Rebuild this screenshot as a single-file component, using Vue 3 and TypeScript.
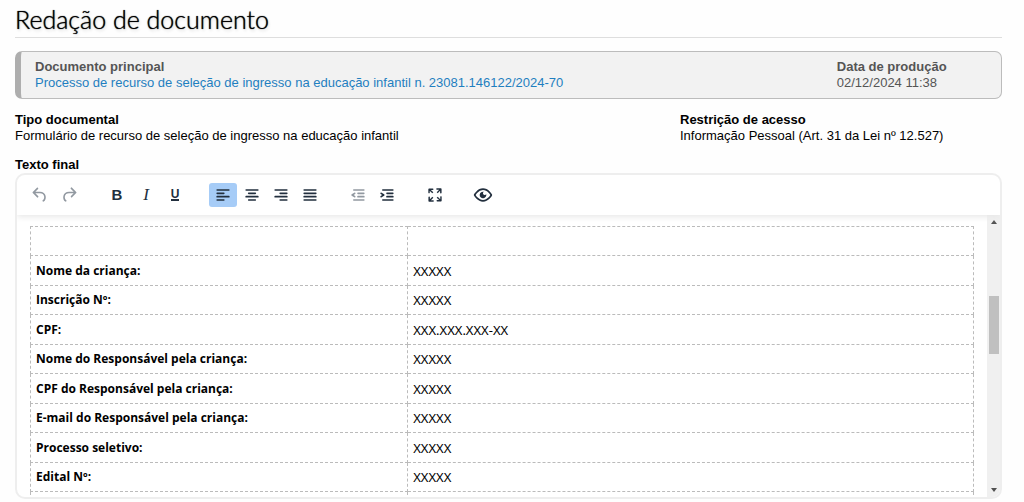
<script setup lang="ts">
import { ref } from 'vue'

interface Tool {
  id: string
  label: string
  path?: string
  glyph?: string
  disabled?: boolean
}

interface Field {
  label: string
  value: string
}

const line = (x: number, y: number, w: number): string =>
  `M${x} ${y}h${w}a1 1 0 0 1 0 2h${-w}a1 1 0 0 1 0-2Z`

const groups: Tool[][] = [
  [
    {
      id: 'undo',
      label: 'Desfazer',
      disabled: true,
      path: 'M6.4 8H12c3.7 0 6.2 2 6.8 5.1.6 2.7-.4 5.6-2.3 6.8a1 1 0 0 1-1-1.8c1.1-.6 1.8-2.7 1.4-4.6-.5-2.1-2.1-3.5-4.9-3.5H6.4l3.3 3.3a1 1 0 1 1-1.4 1.4l-5-5a1 1 0 0 1 0-1.4l5-5a1 1 0 0 1 1.4 1.4L6.4 8Z',
    },
    {
      id: 'redo',
      label: 'Refazer',
      disabled: true,
      path: 'M17.6 10H12c-2.8 0-4.4 1.4-4.9 3.5-.4 2 .3 4 1.4 4.6a1 1 0 1 1-1 1.8c-2-1.2-2.9-4.1-2.3-6.8.6-3 3-5.1 6.8-5.1h5.6l-3.3-3.3a1 1 0 1 1 1.4-1.4l5 5a1 1 0 0 1 0 1.4l-5 5a1 1 0 0 1-1.4-1.4l3.3-3.3Z',
    },
  ],
  [
    { id: 'bold', label: 'Negrito', glyph: 'B' },
    { id: 'italic', label: 'Itálico', glyph: 'I' },
    { id: 'underline', label: 'Sublinhado', glyph: 'U' },
  ],
  [
    { id: 'left', label: 'Alinhar à esquerda', path: line(5, 5, 14) + line(5, 9, 8) + line(5, 13, 14) + line(5, 17, 8) },
    { id: 'center', label: 'Centralizar', path: line(5, 5, 14) + line(8, 9, 8) + line(5, 13, 14) + line(8, 17, 8) },
    { id: 'right', label: 'Alinhar à direita', path: line(5, 5, 14) + line(11, 9, 8) + line(5, 13, 14) + line(11, 17, 8) },
    { id: 'justify', label: 'Justificar', path: line(5, 5, 14) + line(5, 9, 14) + line(5, 13, 14) + line(5, 17, 14) },
  ],
  [
    {
      id: 'outdent',
      label: 'Diminuir recuo',
      disabled: true,
      path: line(7, 5, 12) + line(12, 9, 7) + line(12, 13, 7) + line(7, 17, 12) +
        'M8.6 13.2a1 1 0 0 1-1.2 1.6l-3-2a1 1 0 0 1 0-1.6l3-2a1 1 0 0 1 1.2 1.6L6.8 12l1.8 1.2Z',
    },
    {
      id: 'indent',
      label: 'Aumentar recuo',
      path: line(7, 5, 12) + line(12, 9, 7) + line(12, 13, 7) + line(7, 17, 12) +
        'M4.4 13.2 6.2 12l-1.8-1.2a1 1 0 0 1 1.2-1.6l3 2a1 1 0 0 1 0 1.6l-3 2a1 1 0 1 1-1.2-1.6Z',
    },
  ],
  [
    {
      id: 'fullscreen',
      label: 'Tela cheia',
      path: 'm15.3 10-1.2-1.3 2.9-3h-2.3a.9.9 0 1 1 0-1.7H19c.5 0 .9.4.9.9v4.4a.9.9 0 1 1-1.8 0V7l-2.9 3Zm0 4 3 3v-2.3a.9.9 0 1 1 1.7 0V19c0 .5-.4.9-.9.9h-4.4a.9.9 0 1 1 0-1.8H17l-3-2.9 1.3-1.2ZM10 15.4l-2.9 3h2.3a.9.9 0 1 1 0 1.7H5a.9.9 0 0 1-.9-.9v-4.4a.9.9 0 1 1 1.8 0V17l2.9-3 1.2 1.3ZM8.7 10 5.7 7v2.3a.9.9 0 0 1-1.7 0V5c0-.5.4-.9.9-.9h4.4a.9.9 0 0 1 0 1.8H7l3 2.9-1.3 1.2Z',
    },
  ],
  [
    {
      id: 'preview',
      label: 'Visualizar',
      path: 'M3.5 12.5c.5.8 1.1 1.6 1.8 2.3 2 2 4.2 3.2 6.7 3.2s4.7-1.2 6.7-3.2a16.2 16.2 0 0 0 2.1-2.8 15.7 15.7 0 0 0-2.1-2.8c-2-2-4.2-3.2-6.7-3.2a9.3 9.3 0 0 0-6.7 3.2A16.2 16.2 0 0 0 3.2 12c0 .2.2.3.3.5Zm-2.4-1 .7-1.2L4 7.8C6.2 5.4 8.9 4 12 4c3 0 5.8 1.4 8.1 3.8a18.2 18.2 0 0 1 2.8 3.7v1l-.7 1.2a18.1 18.1 0 0 1-2.1 2.5c-2.3 2.4-5 3.8-8.1 3.8-3 0-5.8-1.4-8.1-3.8a18.2 18.2 0 0 1-2.8-3.7 1 1 0 0 1 0-1Zm12-3.3a2 2 0 1 0 2.7 2.6 4 4 0 1 1-2.6-2.6Z',
    },
  ],
]

const active = ref('left')

function choose(tool: Tool): void {
  if (['left', 'center', 'right', 'justify'].includes(tool.id)) active.value = tool.id
}

const fields: Field[] = [
  { label: '', value: '' },
  { label: 'Nome da criança:', value: 'XXXXX' },
  { label: 'Inscrição Nº:', value: 'XXXXX' },
  { label: 'CPF:', value: 'XXX.XXX.XXX-XX' },
  { label: 'Nome do Responsável pela criança:', value: 'XXXXX' },
  { label: 'CPF do Responsável pela criança:', value: 'XXXXX' },
  { label: 'E-mail do Responsável pela criança:', value: 'XXXXX' },
  { label: 'Processo seletivo:', value: 'XXXXX' },
  { label: 'Edital Nº:', value: 'XXXXX' },
  { label: '', value: '' },
]
</script>

<template>
  <main class="page">
    <h1 class="title">Redação de documento</h1>

    <section class="card">
      <dl class="item">
        <dt>Documento principal</dt>
        <dd><a href="#">Processo de recurso de seleção de ingresso na educação infantil n. 23081.146122/2024-70</a></dd>
      </dl>
      <dl class="item date">
        <dt>Data de produção</dt>
        <dd>02/12/2024 11:38</dd>
      </dl>
    </section>

    <section class="details">
      <dl class="item">
        <dt>Tipo documental</dt>
        <dd>Formulário de recurso de seleção de ingresso na educação infantil</dd>
      </dl>
      <dl class="item access">
        <dt>Restrição de acesso</dt>
        <dd>Informação Pessoal (Art. 31 da Lei nº 12.527)</dd>
      </dl>
    </section>

    <h2 id="final-text" class="label">Texto final</h2>
    <section class="editor" aria-labelledby="final-text">
      <div class="toolbar" role="toolbar">
        <div v-for="(group, i) in groups" :key="i" class="group">
          <button
            v-for="tool in group"
            :key="tool.id"
            type="button"
            class="tool"
            :class="{ active: active === tool.id }"
            :aria-label="tool.label"
            :disabled="tool.disabled"
            @click="choose(tool)"
          >
            <span v-if="tool.glyph" :class="tool.id">{{ tool.glyph }}</span>
            <svg v-else width="20" height="20" viewBox="0 0 24 24" aria-hidden="true">
              <path :d="tool.path" fill="currentColor" fill-rule="evenodd" />
            </svg>
          </button>
        </div>
      </div>

      <div class="viewport">
        <div class="content">
          <table class="form">
            <colgroup>
              <col class="names">
              <col>
            </colgroup>
            <tbody>
              <tr v-for="(field, i) in fields" :key="i">
                <th scope="row">{{ field.label }}</th>
                <td>{{ field.value }}</td>
              </tr>
            </tbody>
          </table>
        </div>
        <div class="scrollbar" aria-hidden="true">
          <svg width="14" height="14" viewBox="0 0 14 14"><path d="M4 9 7 5l3 4Z" fill="#505050" /></svg>
          <div class="track">
            <div class="thumb"></div>
          </div>
          <svg width="14" height="14" viewBox="0 0 14 14"><path d="M4 5 7 9l3-4Z" fill="#505050" /></svg>
        </div>
      </div>
    </section>
  </main>
</template>

<style>
body {
  margin: 0;
  background: #fefefe;
}
</style>

<style scoped>
.page {
  box-sizing: border-box;
  display: flex;
  flex-direction: column;
  height: 100vh;
  padding: 2px 22px 3px 15px;
  color: #000;
  font: 13px/16px "Liberation Sans", Arial, sans-serif;
}

.title {
  flex: none;
  margin: 0 0 13px;
  border-bottom: 1px solid #dedede;
  font: 300 25px/35px Lato, Optima, sans-serif;
  text-shadow: 0 0 1px #000, 1px 2px 3px #ddd;
}

.card,
.details {
  display: flex;
  flex: none;
}

.card {
  padding: 7px 0 7px 14px;
  border: 1px solid #bcbcbc;
  border-left: 6px solid #aeaeae;
  border-radius: 7px;
  background: #f2f2f2;
  color: #555;
}

.item {
  flex: 1;
  margin: 0;
}

.item dt {
  font-weight: 700;
}

.item dd {
  margin: 0;
}

.item a {
  color: #1f7fc0;
  text-decoration: none;
}

.date {
  flex: 0 0 17%;
}

.details {
  margin: 13px 0 12px;
}

.access {
  flex: 0 0 322px;
}

.label {
  flex: none;
  margin: 0;
  font-size: 13px;
  line-height: 17px;
}

.editor {
  display: flex;
  flex: 1;
  flex-direction: column;
  min-height: 0;
  overflow: hidden;
  border: 2px solid #eee;
  border-radius: 10px;
  background: #fff;
}

.toolbar {
  z-index: 1;
  display: flex;
  flex: none;
  gap: 20px;
  padding: 8px 9px;
  box-shadow: 0 2px 6px #e8e8e8;
}

.group {
  display: flex;
  gap: 1px;
}

.tool {
  display: flex;
  align-items: center;
  justify-content: center;
  width: 28px;
  height: 24px;
  padding: 0;
  border: 0;
  border-radius: 3px;
  background: transparent;
  color: #222f3e;
}

.tool:disabled {
  color: #9299a1;
}

.tool.active {
  background: #a6ccf7;
}

.bold {
  font: 700 15px/16px "Liberation Sans", sans-serif;
}

.italic {
  font: italic 400 17px/16px "Liberation Serif", serif;
}

.underline {
  border-bottom: 2px solid;
  font: 700 12px/10px "Liberation Sans", sans-serif;
}

.viewport {
  display: flex;
  flex: 1;
  min-height: 0;
}

.content {
  flex: 1;
  overflow: hidden;
  padding: 11px 13px 0;
}

.form {
  width: 100%;
  border-collapse: collapse;
  table-layout: fixed;
  font: 13px/18px "Noto Sans", "Segoe UI", sans-serif;
}

.names {
  width: 40%;
}

.form tr {
  height: 29px;
}

.form tr:nth-child(even) {
  height: 30px;
}

.form th,
.form td {
  padding: 0 5px;
  border: 1px dashed #bbb;
  text-align: left;
}

.form th {
  font-family: "Open Sans", "Segoe UI", sans-serif;
  font-size: 12px;
  font-weight: 700;
}

.scrollbar {
  display: flex;
  flex: none;
  flex-direction: column;
  width: 13px;
  background: #f0f0f0;
}

.scrollbar svg {
  flex: none;
}

.track {
  flex: 1;
  padding: 67px 1px 0 2px;
}

.thumb {
  height: 58px;
  background: #c0c0c0;
}
</style>
